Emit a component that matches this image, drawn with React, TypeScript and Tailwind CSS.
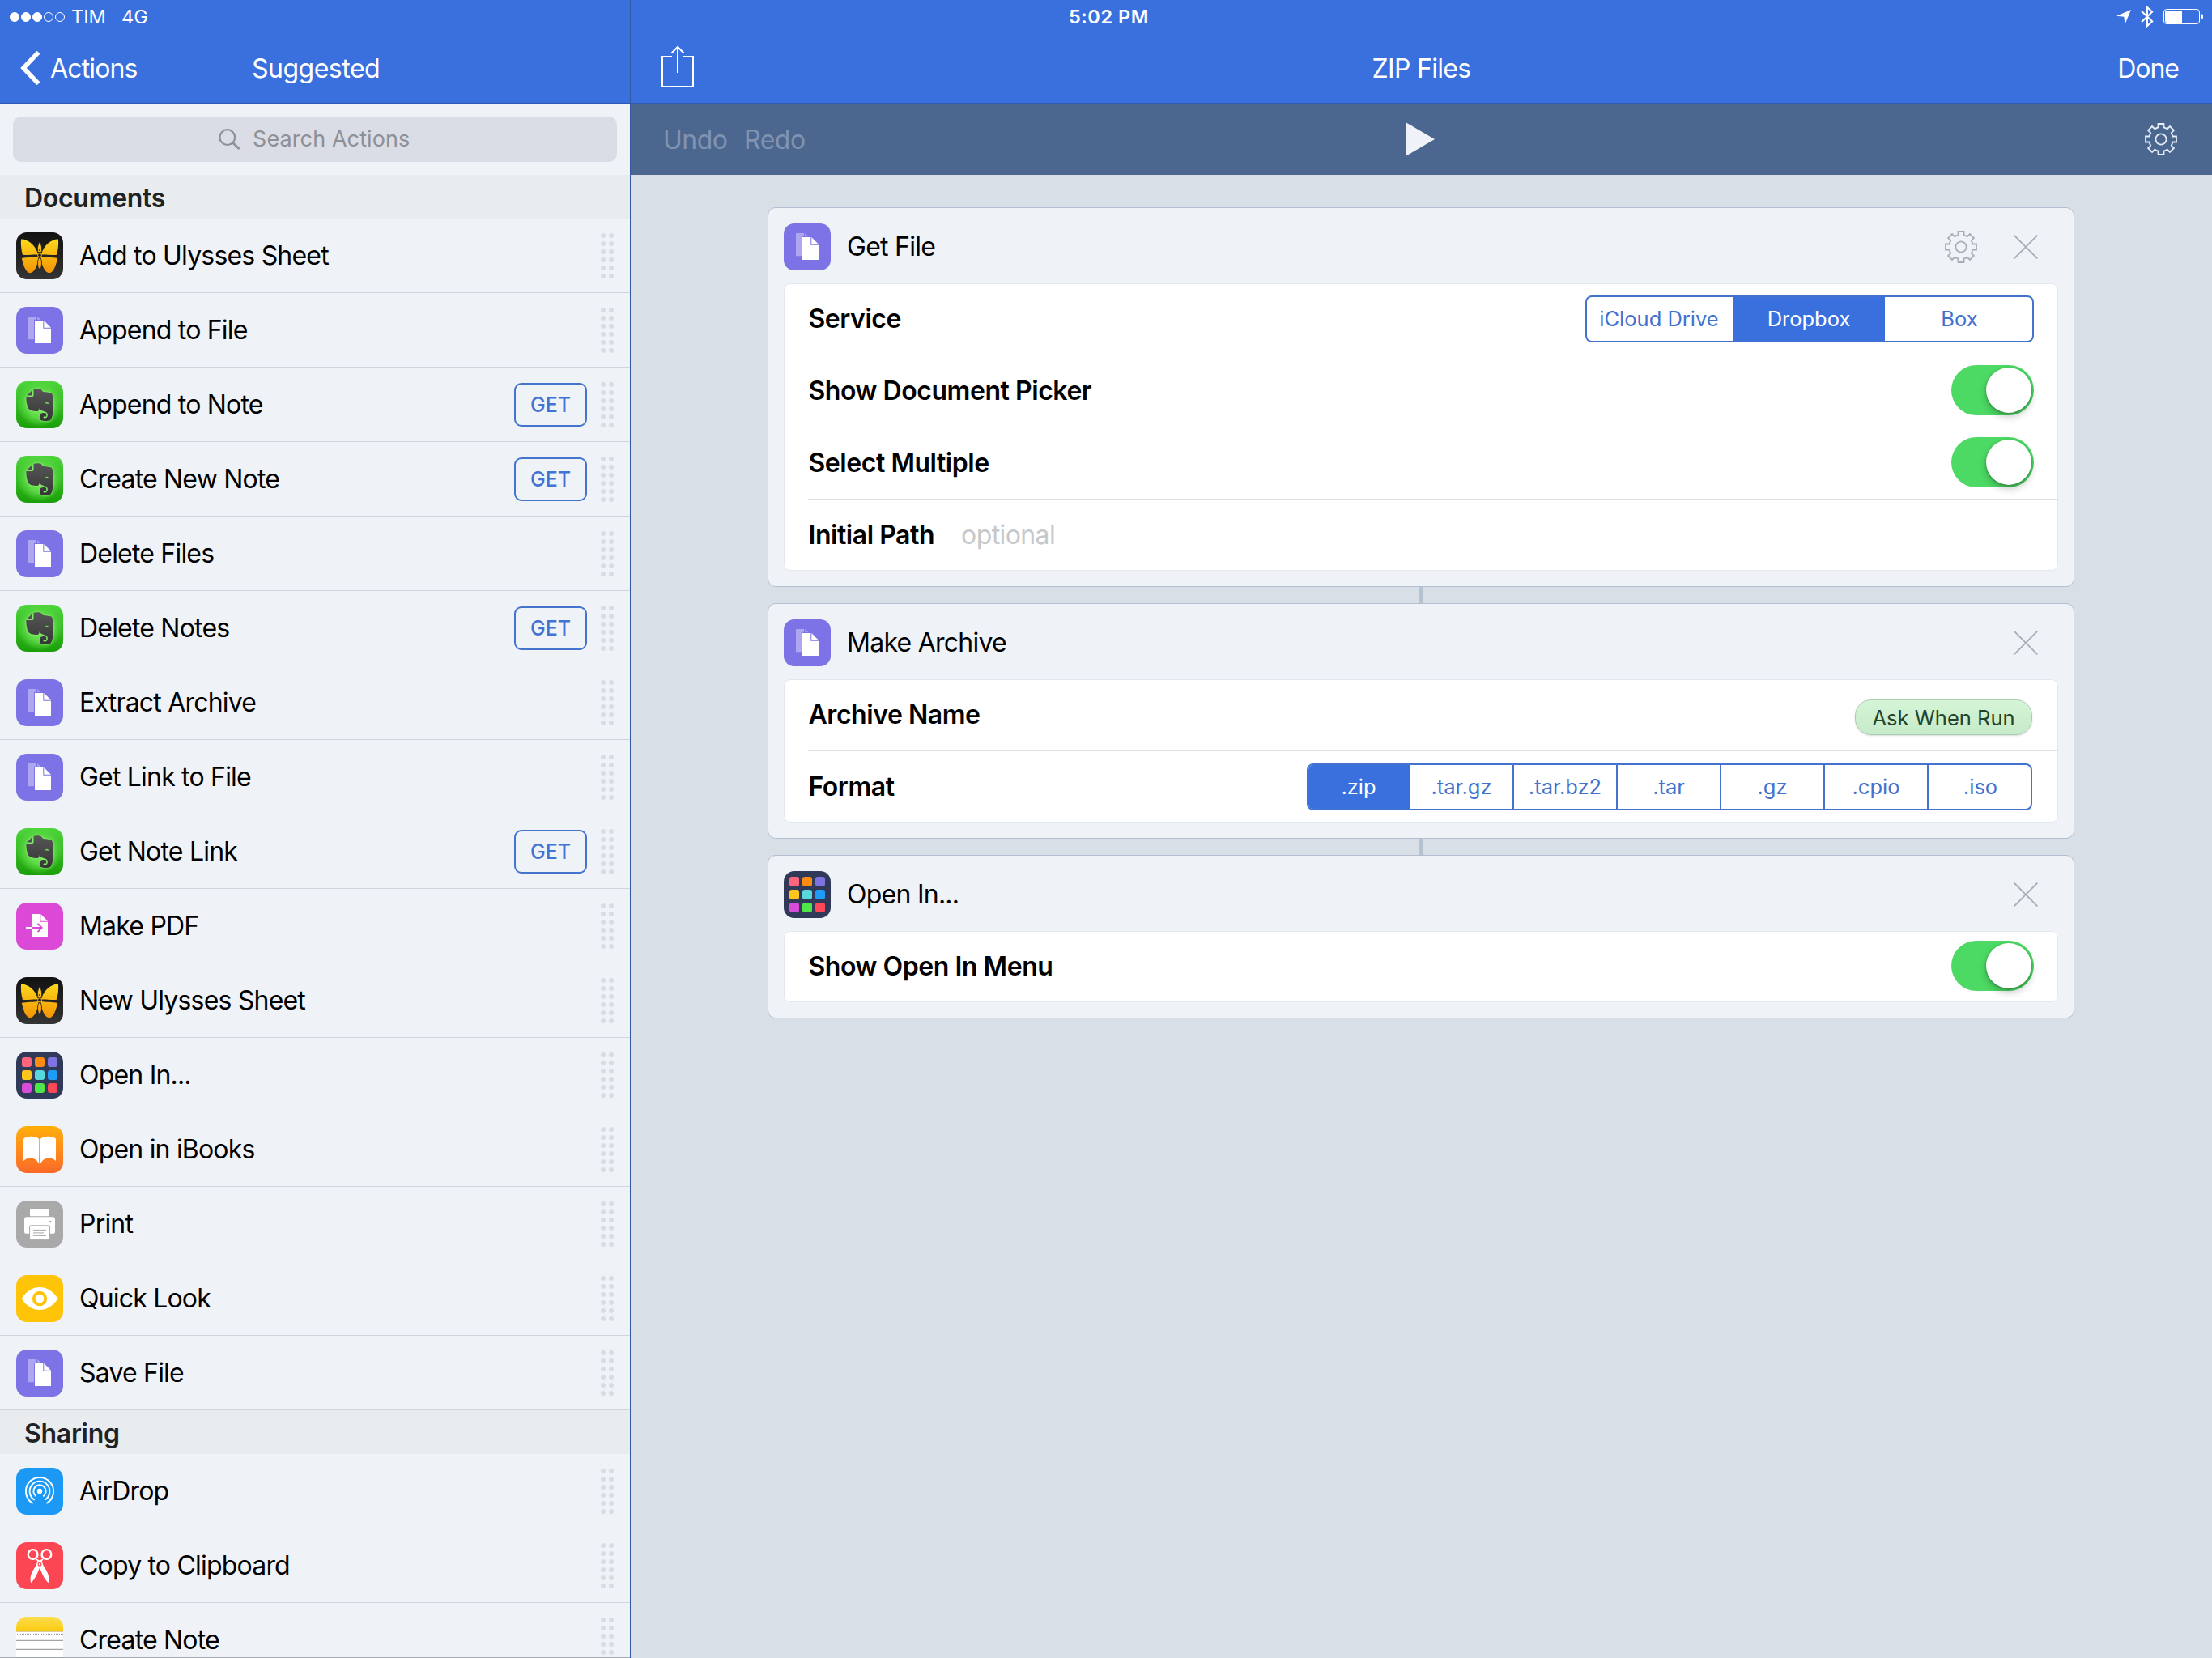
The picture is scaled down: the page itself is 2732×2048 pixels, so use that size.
import React from "react";

type IconName =
  | "ulysses"
  | "file"
  | "evernote"
  | "pdf"
  | "grid"
  | "ibooks"
  | "print"
  | "eye"
  | "airdrop"
  | "scissors"
  | "notes";

type Action = { icon: IconName; label: string; get?: boolean };

const DOCUMENTS: Action[] = [
  { icon: "ulysses", label: "Add to Ulysses Sheet" },
  { icon: "file", label: "Append to File" },
  { icon: "evernote", label: "Append to Note", get: true },
  { icon: "evernote", label: "Create New Note", get: true },
  { icon: "file", label: "Delete Files" },
  { icon: "evernote", label: "Delete Notes", get: true },
  { icon: "file", label: "Extract Archive" },
  { icon: "file", label: "Get Link to File" },
  { icon: "evernote", label: "Get Note Link", get: true },
  { icon: "pdf", label: "Make PDF" },
  { icon: "ulysses", label: "New Ulysses Sheet" },
  { icon: "grid", label: "Open In..." },
  { icon: "ibooks", label: "Open in iBooks" },
  { icon: "print", label: "Print" },
  { icon: "eye", label: "Quick Look" },
  { icon: "file", label: "Save File" },
];

const SHARING: Action[] = [
  { icon: "airdrop", label: "AirDrop" },
  { icon: "scissors", label: "Copy to Clipboard" },
  { icon: "notes", label: "Create Note" },
];

const GRID_COLORS = [
  "#ff657d", "#ff8c10", "#7f72e2",
  "#fcc61c", "#56d8dc", "#1e9bf6",
  "#d84cd9", "#50e64a", "#fe4757",
];

/* Outline of an eight-toothed gear centred on 0,0. */
const GEAR_PATH = (() => {
  const point = (x: number, y: number, turn: number) => {
    const c = Math.cos(turn);
    const s = Math.sin(turn);
    return `${(x * c - y * s).toFixed(2)} ${(x * s + y * c).toFixed(2)}`;
  };
  let d = "";
  for (let k = 0; k < 8; k++) {
    const t = (k * Math.PI) / 4;
    d += `${k === 0 ? "M" : "L"}${point(-3.5, -14.6, t)}L${point(-3.5, -19, t)}L${point(3.5, -19, t)}L${point(3.5, -14.6, t)}`;
  }
  return d + "Z";
})();

function Gear({ className }: { className: string }) {
  return (
    <svg viewBox="-20 -20 40 40" className={className} fill="none" stroke="currentColor" strokeWidth="1.8">
      <path d={GEAR_PATH} />
      <circle r="6.6" />
    </svg>
  );
}

function Close() {
  return (
    <svg viewBox="0 0 30 30" className="size-[30px] text-[#a9adb4]" stroke="currentColor" strokeWidth="1.9">
      <path d="M.6.6l28.8 28.8M29.4.6L.6 29.4" />
    </svg>
  );
}

function IconArt({ name }: { name: IconName }) {
  switch (name) {
    case "ulysses":
      return (
        <svg viewBox="0 0 58 58" className="size-full">
          <defs>
            <linearGradient id="wing" x1="0" y1="8" x2="0" y2="50" gradientUnits="userSpaceOnUse">
              <stop offset="0" stopColor="#fdd81c" />
              <stop offset="1" stopColor="#f49406" />
            </linearGradient>
          </defs>
          <g fill="url(#wing)">
            <path d="M6 8.600C14 8.200 24.500 16 27 27.600C20 27.300 12 28.800 7.900 27.700C6.200 22 5.500 15 6 8.600Z" />
            <path d="M52 8.600C44 8.200 33.500 16 31 27.600C38 27.300 46 28.800 50.100 27.700C51.800 22 52.500 15 52 8.600Z" />
            <path d="M6.800 32C13 30.400 22 31.200 27.600 29.700C27.500 37 23.500 50 17 50.200C11.500 50 8.500 39 6.800 32Z" />
            <path d="M51.200 32C45 30.400 36 31.200 30.400 29.700C30.500 37 34.500 50 41 50.200C46.500 50 49.500 39 51.200 32Z" />
            <path d="M29 11.600C31 15 32.300 19 31.200 24.600H26.800C25.700 19 27 15 29 11.600Z" stroke="#1c1c1c" strokeWidth=".8" />
            <ellipse cx="29" cy="38.300" rx="2.500" ry="7" stroke="#1c1c1c" strokeWidth=".8" />
          </g>
          <circle cx="29" cy="22" r="1" fill="#1c1c1c" />
          <circle cx="29" cy="28.200" r="2.400" fill="#1c1c1c" stroke="#f9b90e" strokeWidth="1" />
        </svg>
      );
    case "file":
      return (
        <svg viewBox="0 0 58 58" className="size-full" fill="#fff">
          <g opacity=".38">
            <path d="M15 12H25V15.800H22V40.300H15Z" />
            <path d="M26.200 12L30 15.800H26.200Z" />
          </g>
          <path d="M23 17H33.300V26.700H43V45H23Z" />
          <path d="M34.300 17L43 25.700H34.300Z" />
        </svg>
      );
    case "evernote":
      return (
        <svg viewBox="0 0 58 58" className="size-full">
          <defs>
            <linearGradient id="elephant" x1="0" y1="9" x2="0" y2="49" gradientUnits="userSpaceOnUse">
              <stop offset="0" stopColor="#565656" />
              <stop offset="1" stopColor="#363636" />
            </linearGradient>
          </defs>
          <g fill="url(#elephant)" className="drop-shadow-[0_0_1.5px_#9bf77f]">
            <path d="M21.500 10C23 9 29.500 9 30.500 10C32 11 32 12 33 12.700C36 13.300 41 13.500 43.500 14.500C45.500 16 46.200 24 45.800 32C45.500 40 44.500 46 42 48C39 49.500 32 49.300 30 47.500C28.300 45.500 28.300 42 30.500 39.800C32 38.600 36 38.600 37.200 39.800V43.400H34.800C33.200 43.400 33.200 45.600 35 45.600C38 45.600 39.200 43.500 38.700 40.500C38 37.500 35 37.500 32.500 36.500C30 35.500 29.500 34.500 29 32.500C28.500 36 27.500 37 25.500 37C21 37 16.500 36 15 33.500C13 30 12.300 24 12.300 19H19.500C21 19 21.500 18 21.500 17Z" />
            <path d="M13.200 17.400L19.900 10.800V16C19.900 17 19.400 17.400 18.500 17.400Z" />
          </g>
          <path d="M35.700 27.700C36.200 25 40 25 40.800 28.400C39 27.300 37.500 27.200 35.700 27.700Z" fill="#6bdf4e" />
        </svg>
      );
    case "pdf":
      return (
        <svg viewBox="0 0 58 58" className="size-full">
          <path d="M19 14H29.300V23.700H39V42H19Z" fill="#fff" />
          <path d="M30.300 14L39 22.700H30.300Z" fill="#fff" />
          <path d="M12 31H19" stroke="#fff" strokeWidth="2" />
          <path d="M19 31H31.500M26.600 25.900L31.700 31L26.600 36.100" stroke="#dc49d6" strokeWidth="2" fill="none" />
        </svg>
      );
    case "grid":
      return (
        <div className="grid grid-cols-3 gap-1">
          {GRID_COLORS.map((c) => (
            <span key={c} className="size-3 rounded-[3px]" style={{ backgroundColor: c }} />
          ))}
        </div>
      );
    case "ibooks":
      return (
        <svg viewBox="0 0 58 58" className="size-full" fill="#fff">
          <path d="M9 15.800C12 12 24 11.200 28.200 16V47C25 38.500 14.500 37.500 9 43Z" />
          <path d="M49 15.800C46 12 34 11.200 29.800 16V47C33 38.500 43.500 37.500 49 43Z" />
        </svg>
      );
    case "print":
      return (
        <svg viewBox="0 0 58 58" className="size-full">
          <rect x="17" y="10" width="24" height="9.300" rx="1" fill="#fff" />
          <rect x="10" y="20.300" width="38" height="20.500" rx="2.600" fill="#fff" />
          <rect x="16.600" y="30.800" width="25" height="17.400" rx="1" fill="#fff" stroke="#a9a9a9" strokeWidth="1" />
          <path d="M21 36.400H37M21 39.900H34M21 43.400H37" stroke="#a9a9a9" strokeWidth="1" />
          <circle cx="42.200" cy="26" r="1.300" fill="#a9a9a9" />
        </svg>
      );
    case "eye":
      return (
        <svg viewBox="0 0 58 58" className="size-full">
          <path d="M6.800 29C13 19 21 15 29 15S45 19 51.500 29C45 39 37 43 29 43S13 39 6.800 29Z" fill="#fff" />
          <circle cx="29" cy="29" r="9.200" fill="#ffc408" />
          <circle cx="29" cy="29" r="5.300" fill="#fff" />
        </svg>
      );
    case "airdrop":
      return (
        <svg viewBox="-29 -29 58 58" className="size-full" fill="none" stroke="#fff" strokeWidth="1.900">
          <path d="M-8.300 15A17.100 17.100 0 1 1 8.300 15" />
          <path d="M-6.200 10.800A12.400 12.400 0 1 1 6.200 10.800" />
          <path d="M-4.300 6.400A7.700 7.700 0 1 1 4.300 6.400" />
          <circle r="3.200" fill="#fff" stroke="none" />
        </svg>
      );
    case "scissors":
      return (
        <svg viewBox="0 0 58 58" className="size-full">
          <g fill="none" stroke="#fff" strokeWidth="2.400">
            <circle cx="20.600" cy="15" r="5.900" />
            <circle cx="37.400" cy="15" r="5.900" />
          </g>
          <path d="M23.500 19.500L27 21.500L29 22.500L31 21.500L34.500 19.500L31.800 23.500C32.500 26 33 28 34.500 30.500C38 36 42 42 39.800 50.300C35 46 31.500 38 29 31.500C26.500 38 23 46 18.200 50.300C16 42 20 36 23.500 30.500C25 28 25.500 26 26.200 23.500Z" fill="#fff" />
          <circle cx="29" cy="27.300" r="1.900" fill="none" stroke="#fd4654" strokeWidth="1.200" />
        </svg>
      );
    case "notes":
      return (
        <svg viewBox="0 0 58 58" className="size-full">
          <defs>
            <linearGradient id="notepad" x1="0" y1="0" x2="0" y2="1">
              <stop offset="0" stopColor="#fddc50" />
              <stop offset="1" stopColor="#fbcc0c" />
            </linearGradient>
          </defs>
          <rect width="58" height="18" fill="url(#notepad)" />
          <path d="M0 18.300H58" stroke="#c9b36a" strokeWidth=".8" />
          <path d="M1 21.400H58" stroke="#909090" strokeWidth="1" strokeDasharray="1 1" />
          <path d="M0 29.300H58M0 40.300H58" stroke="#8e8e8e" strokeWidth="1" />
        </svg>
      );
  }
}

const ICON_BG: Record<IconName, string> = {
  ulysses: "bg-linear-to-b from-[#121212] to-[#343434]",
  file: "bg-[#7d72e6]",
  evernote: "bg-[radial-gradient(circle_at_50%_48%,#86ec69_0%,#5cd945_40%,transparent_68%),linear-gradient(#4fd53c,#1a9f08)]",
  pdf: "bg-[#dc49d6]",
  grid: "bg-[#303a58]",
  ibooks: "bg-linear-to-b from-[#ffae04] to-[#fa6826]",
  print: "bg-[#a9a9a9]",
  eye: "bg-[#ffc408]",
  airdrop: "bg-[#1b99f5]",
  scissors: "bg-[#fd4654]",
  notes: "bg-white",
};

function AppIcon({ name }: { name: IconName }) {
  return (
    <div className={`flex size-[58px] shrink-0 items-center justify-center overflow-hidden rounded-[13px] ${ICON_BG[name]}`}>
      <IconArt name={name} />
    </div>
  );
}

function DragHandle() {
  return (
    <div className="grid grid-cols-2 gap-1">
      {Array.from({ length: 12 }, (_, i) => (
        <span key={i} className="size-1.5 rounded-full bg-[#d9dce2]" />
      ))}
    </div>
  );
}

function ActionRow({ icon, label, get }: Action) {
  return (
    <li className="flex h-[92px] shrink-0 items-center border-b border-[#d1d6de] pr-5 pl-5">
      <AppIcon name={icon} />
      <span className="ml-5 flex-1 pt-px tracking-[-0.8px] whitespace-nowrap text-black">{label}</span>
      {get && (
        <button className="mr-[17px] flex h-[54px] w-[90px] items-center justify-center rounded-[9px] border-2 border-[#4474cc] pt-px text-[25px] font-medium text-[#4373d2]">
          GET
        </button>
      )}
      <DragHandle />
    </li>
  );
}

function SectionHeader({ children }: { children: string }) {
  return (
    <h2 className="flex h-[54px] shrink-0 items-center bg-[#e8ecee] pt-[3px] pl-[30px] font-semibold tracking-[-0.3px] text-[#1f2225]">
      {children}
    </h2>
  );
}

function StatusBar() {
  return (
    <div className="absolute inset-x-0 top-0 z-10 flex h-[41px] items-center justify-between pr-[11px] pl-3 text-[23.5px] text-white">
      <div className="flex items-center">
        <div className="mr-2 flex gap-[2px]">
          {[true, true, true, false, false].map((on, i) => (
            <span key={i} className={`size-3 rounded-full border border-white ${on ? "bg-white" : ""}`} />
          ))}
        </div>
        <span className="w-[62px]">TIM</span>
        <span>4G</span>
      </div>
      <span className="absolute left-[1320px] font-semibold tracking-[0.55px]">5:02 PM</span>
      <div className="flex items-center">
        <svg viewBox="0 0 18 18" className="mr-3 h-[18px] w-[18px]" fill="#fff">
          <path d="M18 0L10.500 18L9.300 8.800L0 7.800Z" />
        </svg>
        <svg viewBox="0 0 16 27" className="mr-3 h-[27px] w-4" fill="none" stroke="#fff" strokeWidth="2">
          <path d="M1 6.800L14.200 19.500L8 25V2L14.200 7.500L1 20.200" />
        </svg>
        <div className="h-[19px] w-[45px] rounded-[4px] border border-white p-[1px]">
          <div className="h-full w-[21px] rounded-l-[2px] bg-white" />
        </div>
        <div className="ml-[1px] h-[7px] w-[3px] rounded-r-full bg-white" />
      </div>
    </div>
  );
}

function Sidebar() {
  return (
    <aside className="flex h-full w-[779px] shrink-0 flex-col overflow-hidden border-r border-[#3558a6] bg-[#eff3f8]">
      <header className="flex h-32 shrink-0 items-center border-b border-[#2f56b2] bg-[#3a70dd] pt-[41px] pl-[25px] text-white">
        <svg viewBox="0 0 25 42" className="h-[42px] w-[25px]" fill="none" stroke="#fff" strokeWidth="5.500">
          <path d="M22.500 1.500L4 21L22.500 40.500" />
        </svg>
        <span className="ml-3 w-[249px] pt-[2px] tracking-[-0.85px]">Actions</span>
        <span className="pt-[2px] tracking-[-0.5px]">Suggested</span>
      </header>
      <div className="flex h-[88px] shrink-0 items-center px-4">
        <div className="flex h-14 w-full items-center rounded-[10px] bg-[#dadde5] pl-[254px] text-[#8d9097]">
          <svg viewBox="0 0 27 26" className="h-[26px] w-[27px]" fill="none" stroke="currentColor" strokeWidth="2.200">
            <circle cx="10.800" cy="10.600" r="9.400" />
            <path d="M17.600 17.400L25.600 25" strokeWidth="2.800" />
          </svg>
          <span className="ml-[15px] pb-px text-[27px] tracking-[0.1px]">Search Actions</span>
        </div>
      </div>
      <SectionHeader>Documents</SectionHeader>
      <ul>
        {DOCUMENTS.map((a) => (
          <ActionRow key={a.label} {...a} />
        ))}
      </ul>
      <SectionHeader>Sharing</SectionHeader>
      <ul className="h-[252px] shrink-0 overflow-hidden border-b border-[#a3a8af]">
        {SHARING.map((a) => (
          <ActionRow key={a.label} {...a} />
        ))}
      </ul>
    </aside>
  );
}

function Card({
  icon,
  title,
  settings,
  children,
}: {
  icon: IconName;
  title: string;
  settings?: boolean;
  children: React.ReactNode;
}) {
  return (
    <section className="w-full rounded-[10px] border border-[#b3bfd0] bg-[#eff3f8] px-[19px] pb-[19px]">
      <div className="flex h-[93px] items-center pt-[3px] pr-[25px]">
        <AppIcon name={icon} />
        <h3 className="ml-5 flex-1 tracking-[-0.75px]">{title}</h3>
        {settings && <Gear className="mr-[45px] size-10 text-[#a9adb4]" />}
        <Close />
      </div>
      <div className="rounded-[8px] bg-white shadow-[inset_0_0_0_1px_#e3e8ef]">{children}</div>
    </section>
  );
}

function Row({ label, last, children }: { label: string; last?: boolean; children?: React.ReactNode }) {
  return (
    <div
      className={
        last
          ? "ml-[30px] flex h-[88px] items-center pr-[30px]"
          : "ml-[30px] flex h-[89px] items-center border-b border-[#dcdfe3] pr-[30px]"
      }
    >
      <span className="pl-[0.5px] font-semibold tracking-[-0.45px] whitespace-nowrap">{label}</span>
      {children}
    </div>
  );
}

function Switch() {
  return (
    <div className="-mt-[2px] ml-auto flex h-[62px] w-[102px] justify-end rounded-full bg-[#4cd964] p-[3px]">
      <span className="size-14 rounded-full bg-white shadow-[0_5px_10px_rgba(0,0,0,0.22),0_1px_3px_rgba(0,0,0,0.3)]" />
    </div>
  );
}

function Connector() {
  return <div className="h-5 w-1 bg-[#b5c2cf]" />;
}

const FORMATS = [".zip", ".tar.gz", ".tar.bz2", ".tar", ".gz", ".cpio", ".iso"];

function Editor() {
  return (
    <main className="flex h-full flex-1 flex-col bg-[#d8dfe7]">
      <header className="relative flex h-32 shrink-0 items-center justify-between border-b border-[#2f5cb0] bg-[#3a70dd] pt-[41px] pr-[41px] pl-[38px] text-white">
        <svg viewBox="0 0 40 52" className="mb-[5px] h-[52px] w-10" fill="none" stroke="#fff" strokeWidth="2">
          <path d="M13 14H1V51H39V14H27" />
          <path d="M20 34V2M12.500 9.500L20 2L27.500 9.500" />
        </svg>
        <span className="absolute inset-x-0 pt-[2px] text-center tracking-[-0.7px]">ZIP Files</span>
        <span className="pt-[2px] tracking-[-1px]">Done</span>
      </header>
      <div className="relative flex h-[88px] shrink-0 items-center bg-[#4c678f] pr-[43px] pl-10 text-[#8093b1]">
        <span className="w-[100px] pt-px tracking-[-0.5px]">Undo</span>
        <span className="pt-px tracking-[-0.5px]">Redo</span>
        <svg viewBox="0 0 36 42" className="absolute left-[957px] h-[42px] w-9" fill="#eff3f9">
          <path d="M0 0L36 21L0 42Z" />
        </svg>
        <Gear className="ml-auto size-10 text-[#e6eef8]" />
      </div>
      <div className="flex flex-col items-center pt-10 pr-[170px] pl-[169px] text-black">
        <Card icon="file" title="Get File" settings>
          <Row label="Service">
            <div className="ml-auto flex h-[58px] w-[554px] overflow-hidden rounded-[8px] border-2 border-[#4373cc] text-[25.500px] text-[#4372cd]">
              <span className="flex w-[180px] items-center justify-center pr-[2px]">iCloud Drive</span>
              <span className="flex w-[188px] items-center justify-center bg-[#3a70dd] text-white">Dropbox</span>
              <span className="flex flex-1 items-center justify-center pl-[2px]">Box</span>
            </div>
          </Row>
          <Row label="Show Document Picker">
            <Switch />
          </Row>
          <Row label="Select Multiple">
            <Switch />
          </Row>
          <Row label="Initial Path" last>
            <span className="ml-[33px] tracking-[-0.6px] text-[#c7c8cb]">optional</span>
          </Row>
        </Card>
        <Connector />
        <Card icon="file" title="Make Archive">
          <Row label="Archive Name">
            <span className="mt-[6px] mr-[2px] ml-auto flex h-11 w-[219px] items-center justify-center rounded-[20px] border border-[#a9cdae] bg-linear-to-b from-[#d5f5d6] to-[#c6eaca] pt-px text-[25.500px] text-[#24432a] shadow-[0_1px_2px_rgba(0,0,0,0.15)]">
              Ask When Run
            </span>
          </Row>
          <Row label="Format" last>
            <div className="mr-[2px] ml-auto flex h-[58px] w-[896px] overflow-hidden rounded-[8px] border-2 border-[#4373cc] text-[25.500px] text-[#4372cd]">
              {FORMATS.map((f, i) => (
                <span
                  key={f}
                  className={`flex items-center justify-center border-[#4373cc] ${
                    i === 0 ? "w-[126px] bg-[#3a70dd] pr-[2px] text-white" : i === 6 ? "w-[126px] pl-[2px]" : "w-32 border-r-2"
                  }`}
                >
                  {f}
                </span>
              ))}
            </div>
          </Row>
        </Card>
        <Connector />
        <Card icon="grid" title="Open In...">
          <Row label="Show Open In Menu" last>
            <Switch />
          </Row>
        </Card>
      </div>
    </main>
  );
}

export default function App() {
  return (
    <div className="relative flex h-[2048px] w-[2732px] overflow-hidden font-['Inter',sans-serif] text-[32px] leading-none">
      <StatusBar />
      <Sidebar />
      <Editor />
    </div>
  );
}
